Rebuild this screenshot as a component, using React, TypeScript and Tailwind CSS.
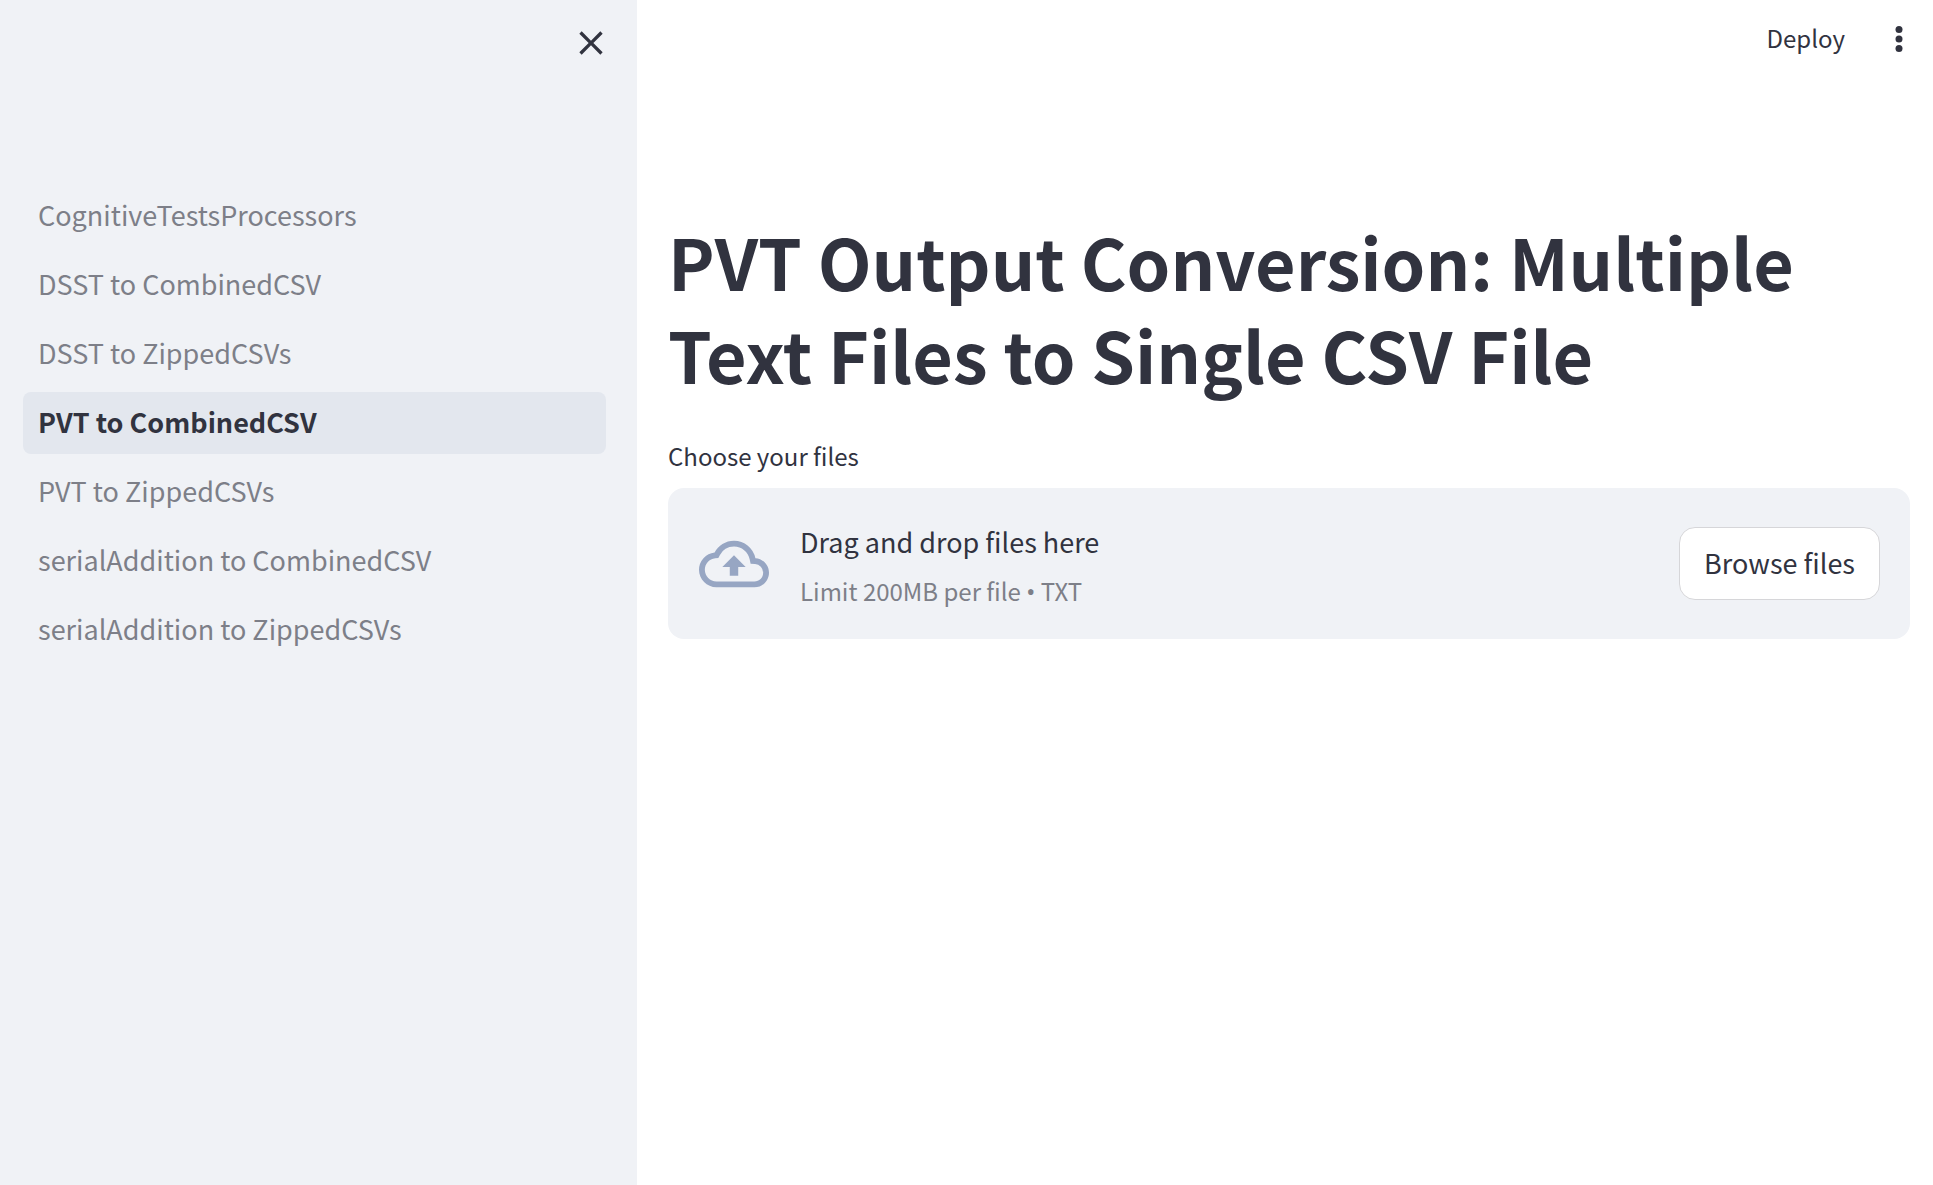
import { MdClose } from "react-icons/md";

const pages = [
  "CognitiveTestsProcessors",
  "DSST to CombinedCSV",
  "DSST to ZippedCSVs",
  "PVT to CombinedCSV",
  "PVT to ZippedCSVs",
  "serialAddition to CombinedCSV",
  "serialAddition to ZippedCSVs",
];
const current = "PVT to CombinedCSV";

function Sidebar() {
  return (
    <aside className="w-[637px] shrink-0 bg-[#f0f2f6]">
      <div className="flex h-[185px] items-start justify-end pt-[23px] pr-[26px]">
        <button type="button" aria-label="Close sidebar">
          <MdClose size={40} />
        </button>
      </div>
      <nav aria-label="Pages" className="pr-[31px] pl-[23px]">
        <ul className="flex flex-col gap-[7px]">
          {pages.map((page) => (
            <li key={page}>
              <a
                href="#"
                aria-current={page === current ? "page" : undefined}
                className={
                  page === current
                    ? "flex h-[62px] items-center rounded-lg bg-[#e3e7ee] px-[15px] pb-[2px] text-[27px] font-semibold"
                    : "flex h-[62px] items-center rounded-lg px-[15px] pb-[2px] text-[27px] text-[#7d7f88]"
                }
              >
                {page}
              </a>
            </li>
          ))}
        </ul>
      </nav>
    </aside>
  );
}

function Uploader() {
  return (
    <section className="mt-9">
      <label htmlFor="files" className="block text-[24px] leading-[40px]">
        Choose your files
      </label>
      <div className="mt-3 flex h-[151px] items-center rounded-2xl bg-[#f0f2f6] pr-[30px] pl-[31px]">
        <svg viewBox="0 0 24 24" className="size-[70px] fill-[#97a6c3]" aria-hidden="true">
          <path d="M19.35 10.04A7.49 7.49 0 0012 4C9.11 4 6.6 5.64 5.35 8.04A5.994 5.994 0 000 14c0 3.31 2.69 6 6 6h13c2.76 0 5-2.24 5-5 0-2.64-2.05-4.78-4.65-4.96zM19 18H6c-2.21 0-4-1.79-4-4 0-2.05 1.53-3.76 3.56-3.97l1.07-.11.5-.95A5.469 5.469 0 0112 6c2.62 0 4.88 1.86 5.39 4.43l.3 1.5 1.53.11A2.98 2.98 0 0122 15c0 1.65-1.35 3-3 3zM8 13h2.55v3h2.9v-3H16l-4-4z" />
        </svg>
        <div className="ml-[31px] flex-1 pt-[5px]">
          <p className="text-[27px] leading-[49px]">Drag and drop files here</p>
          <p className="text-[24px] leading-[49px] text-[#7d7f88]">
            Limit 200MB per file <span className="font-['Noto_Sans',sans-serif]">•</span> TXT
          </p>
        </div>
        <input id="files" type="file" multiple accept=".txt" className="sr-only" />
        <button
          type="button"
          className="h-[73px] rounded-2xl border border-[#d6d6d9] bg-white px-6 text-[27px]"
        >
          Browse files
        </button>
      </div>
    </section>
  );
}

export default function App() {
  return (
    <div className="flex min-h-screen bg-white font-['Noto_Sans_CJK_SC',sans-serif] text-[#31333f]">
      <Sidebar />
      <div className="min-w-0 flex-1">
        <header className="flex h-[78px] items-center justify-end gap-[34px] pr-[14px]">
          <button type="button" className="pb-[2px] text-[24px]">
            Deploy
          </button>
          <button type="button" aria-label="Main menu">
            <svg viewBox="0 0 40 40" className="size-10 fill-current" aria-hidden="true">
              <circle cx="20" cy="10.5" r="3.5" />
              <circle cx="20" cy="20" r="3.5" />
              <circle cx="20" cy="29.5" r="3.5" />
            </svg>
          </button>
        </header>
        <main className="pt-[136px] pr-[23px] pl-[31px]">
          <h1 className="text-[70px] leading-[93px] font-bold">
            PVT Output Conversion: Multiple Text Files to Single CSV File
          </h1>
          <Uploader />
        </main>
      </div>
    </div>
  );
}
